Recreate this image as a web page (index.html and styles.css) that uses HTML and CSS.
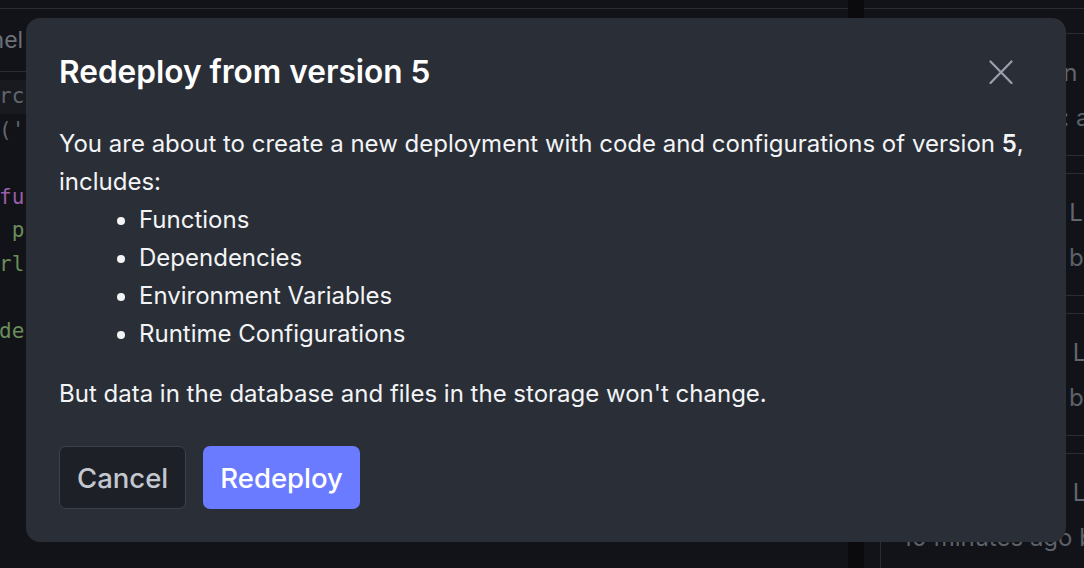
FILE: index.html
```html
<!DOCTYPE html>
<html lang="en">
<head>
<meta charset="utf-8">
<title>Redeploy from version 5</title>
<link rel="stylesheet" href="styles.css">
</head>
<body>
<div class="app">
  <section class="editor">
    <div class="topbar"></div>
    <div class="tabs"><span class="tab">Panel</span></div>
    <div class="code">
      <div class="line current"><span class="c-dim">rc</span></div>
      <div class="line"><span class="c-dim">('</span></div>
      <div class="line"></div>
      <div class="line"><span class="c-kw">fu</span></div>
      <div class="line"><span class="c-str"> p</span></div>
      <div class="line"><span class="c-str">rl</span></div>
      <div class="line"></div>
      <div class="line"><span class="c-str">de</span></div>
    </div>
  </section>
  <div class="gutter"></div>
  <aside class="history">
    <div class="topbar"></div>
    <div class="cards">
      <div class="card">
        <div class="row1">Deployments in the</div>
        <div class="row2">Keep versions: all</div>
      </div>
      <div class="card">
        <div class="row1">Deployment 7, Live</div>
        <div class="row2">2 minutes ago by Lisa</div>
      </div>
      <div class="card">
        <div class="row1">Deployment 6, Live</div>
        <div class="row2">5 minutes ago by Lisa</div>
      </div>
      <div class="card">
        <div class="row1">Deployment 5, Live</div>
        <div class="row2">10 minutes ago by Lisa</div>
      </div>
    </div>
  </aside>
</div>

<div class="overlay">
  <div class="modal" role="dialog" aria-labelledby="modal-title">
    <header class="modal-header">
      <h2 id="modal-title" class="modal-title">Redeploy from version 5</h2>
      <button class="close" aria-label="Close">
        <svg width="24" height="24" viewBox="0 0 24 24" aria-hidden="true"><path d="M1.5 1.5 L22.5 23 M22.5 1.5 L1.5 23" stroke="currentColor" stroke-width="2.2" stroke-linecap="round" fill="none"/></svg>
      </button>
    </header>
    <div class="modal-body">
      <p class="lead">You are about to create a new deployment with code and configurations of version <b>5</b>, includes:</p>
      <ul class="items">
        <li>Functions</li>
        <li>Dependencies</li>
        <li>Environment Variables</li>
        <li>Runtime Configurations</li>
      </ul>
      <p class="note">But data in the database and files in the storage won't change.</p>
    </div>
    <footer class="modal-footer">
      <button class="btn btn-cancel">Cancel</button>
      <button class="btn btn-primary">Redeploy</button>
    </footer>
  </div>
</div>
</body>
</html>
```

FILE: styles.css
```css
* { box-sizing: border-box; }
html, body { margin: 0; padding: 0; }
body {
  width: 1084px;
  height: 568px;
  overflow: hidden;
  background: #111318;
  font-family: Inter, "Noto Sans", sans-serif;
  position: relative;
}

.app {
  display: flex;
  height: 568px;
}

.topbar {
  height: 9px;
  border-bottom: 1px solid #2a2d34;
}

.editor {
  width: 848px;
  flex-shrink: 0;
  background: #111318;
  overflow: hidden;
}
.tabs {
  height: 63px;
  border-bottom: 1px solid #2a2d34;
  display: flex;
  align-items: center;
}
.tab {
  font-family: Inter, sans-serif;
  font-size: 23px;
  color: #6d717a;
  margin-left: -37px;
}
.code {
  font-family: "DejaVu Sans Mono", monospace;
  font-size: 21px;
  padding-top: 8px;
}
.line {
  height: 33.6px;
  line-height: 33.6px;
  white-space: pre;
  margin-left: -1px;
}
.line.current { background: #181a1f; }
.c-dim { color: #62666e; }
.c-kw { color: #9a5ea8; }
.c-str { color: #6a8d5a; }

.gutter {
  width: 16px;
  flex-shrink: 0;
  background: #0b0b0d;
}

.history {
  flex: 1;
  overflow: hidden;
  background: #111318;
}
.cards {
  padding: 24px 0 0 16px;
  display: flex;
  flex-direction: column;
  gap: 17px;
}
.card {
  width: 320px;
  border: 1px solid #2a2d34;
  border-radius: 6px;
  padding: 21px 21px 19px;
  display: flex;
  flex-direction: column;
  gap: 9px;
  color: #5d6169;
  font-size: 24px;
}
.row1, .row2 {
  line-height: 36px;
  white-space: nowrap;
}
.row1 { color: #62666f; }

.overlay {
  position: absolute;
  inset: 0;
}
.modal {
  position: absolute;
  left: 26px;
  top: 18px;
  width: 1040px;
  height: 524px;
  background: #2a2e37;
  border-radius: 14px;
  padding: 34px 33px 33px;
  display: flex;
  flex-direction: column;
  gap: 33px;
  color: #f3f4f6;
}
.modal-header {
  display: flex;
  align-items: center;
  justify-content: space-between;
  height: 40px;
}
.modal-title {
  margin: 0;
  font-size: 31.6px;
  font-weight: 600;
  line-height: 40px;
  color: #ffffff;
}
.close {
  background: none;
  border: 0;
  padding: 0;
  margin-right: 20px;
  width: 24px;
  height: 24px;
  color: #9aa0ab;
  display: flex;
}

.modal-body {
  font-size: 24px;
  line-height: 38px;
}
.modal-body p { margin: 0; }
.lead b { font-weight: 600; }
.items {
  margin: 0;
  padding-left: 80px;
}
.note { margin-top: 22px !important; }

.modal-footer {
  display: flex;
  gap: 17px;
}
.btn {
  height: 63px;
  border-radius: 7px;
  font-family: Inter, sans-serif;
  font-size: 27.5px;
  font-weight: 500;
  padding: 0 17px;
}
.btn-cancel {
  background: #1e2027;
  border: 1.5px solid #3d414c;
  color: #c3c7d0;
}
.btn-primary {
  background: #6b7bff;
  border: 0;
  color: #ffffff;
}
```
